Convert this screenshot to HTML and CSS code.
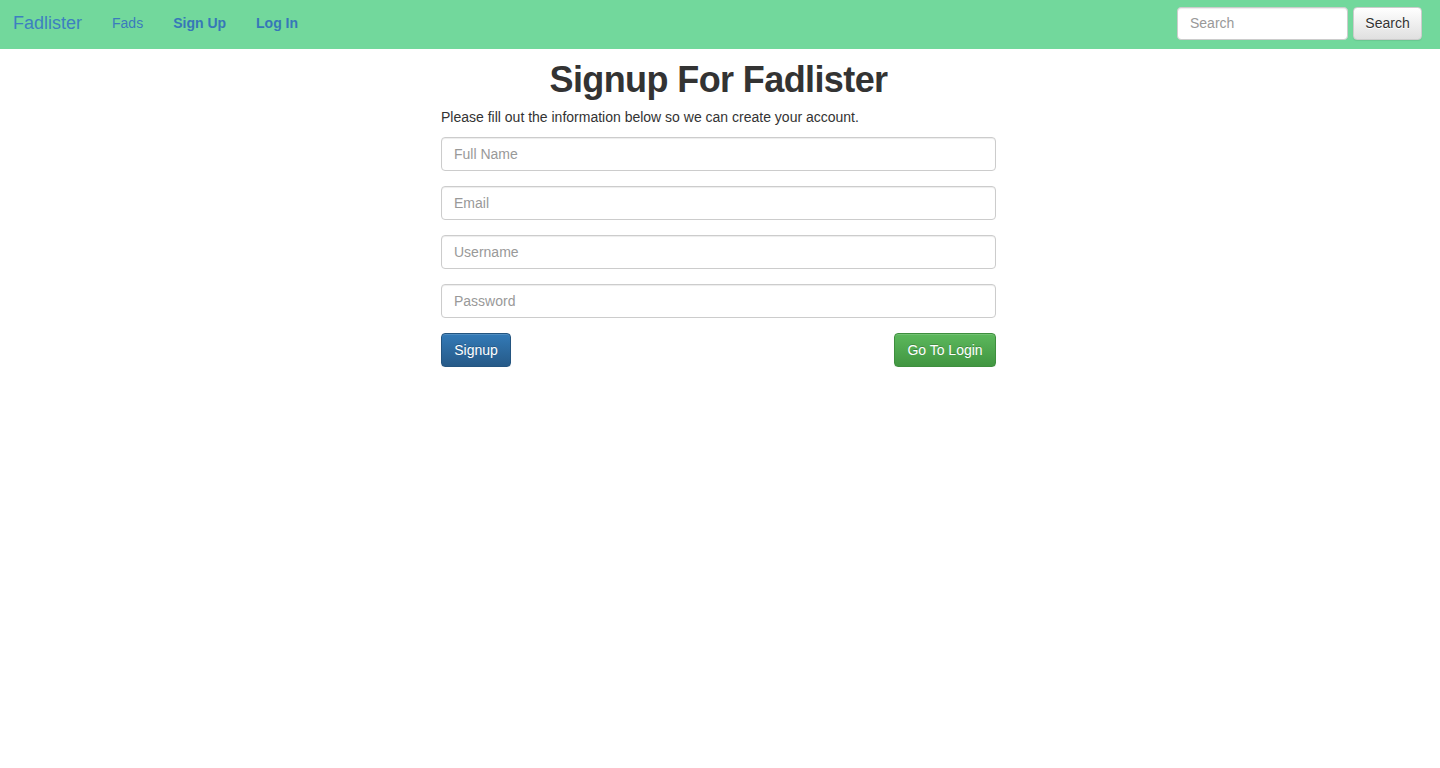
FILE: index.html
```html
<!DOCTYPE html>
<html lang="en">
<head>
<meta charset="utf-8">
<title>Signup For Fadlister</title>
<link rel="stylesheet" href="styles.css">
</head>
<body>
<nav class="navbar">
  <div class="nav-left">
    <a class="brand" href="#">Fadlister</a>
    <a class="nav-link" href="#">Fads</a>
    <a class="nav-link bold" href="#">Sign Up</a>
    <a class="nav-link bold" href="#">Log In</a>
  </div>
  <form class="search-form">
    <input class="search-input" type="text" placeholder="Search">
    <button class="btn btn-default" type="button">Search</button>
  </form>
</nav>
<main class="main">
  <h1 class="title">Signup For Fadlister</h1>
  <p class="intro">Please fill out the information below so we can create your account.</p>
  <form class="signup-form">
    <input class="form-control" type="text" placeholder="Full Name">
    <input class="form-control" type="text" placeholder="Email">
    <input class="form-control" type="text" placeholder="Username">
    <input class="form-control" type="password" placeholder="Password">
    <div class="actions">
      <button class="btn btn-primary" type="button">Signup</button>
      <button class="btn btn-success" type="button">Go To Login</button>
    </div>
  </form>
</main>
</body>
</html>
```
FILE: styles.css
```css
* { box-sizing: border-box; }
html, body { margin: 0; padding: 0; background: #fff; }
body {
  font-family: "Liberation Sans", Arial, Helvetica, sans-serif;
  font-size: 14px;
  line-height: 1.42857;
  color: #333;
}
.navbar {
  height: 49px;
  background: #72d89c;
  display: flex;
  justify-content: space-between;
  align-items: flex-start;
}
.nav-left { display: flex; align-items: flex-start; }
.brand {
  font-size: 18px;
  line-height: 20px;
  padding: 13px 15px 13px 13px;
  color: #3d7fc0;
  text-decoration: none;
}
.nav-link {
  font-size: 14px;
  line-height: 20px;
  padding: 13px 15px;
  color: #3a7bbd;
  text-decoration: none;
}
.nav-link.bold { font-weight: bold; color: #3677b8; }
.search-form {
  display: flex;
  gap: 5px;
  padding: 7px 18px 0 0;
  margin: 0;
}
.search-input {
  width: 171px;
  height: 33px;
  padding: 5px 12px 7px;
  font-family: inherit;
  font-size: 14px;
  color: #555;
  background: #fff;
  border: 1px solid #ccc;
  border-radius: 4px;
  box-shadow: inset 0 1px 1px rgba(0,0,0,.075);
}
.search-input::placeholder, .form-control::placeholder { color: #999; }
.btn {
  height: 33px;
  padding: 6px 12px;
  font-family: inherit;
  font-size: 14px;
  line-height: 20px;
  border-radius: 4px;
  border: 1px solid transparent;
  cursor: pointer;
}
.btn-default {
  width: 69px;
  padding: 5px 0 6px;
  color: #333;
  background: linear-gradient(to bottom, #fff 0%, #e0e0e0 100%);
  border-color: #ccc;
  text-shadow: 0 1px 0 #fff;
  box-shadow: inset 0 1px 0 rgba(255,255,255,.15), 0 1px 1px rgba(0,0,0,.075);
}
.main {
  width: 555px;
  margin: 0 auto;
  padding-right: 3px;
  box-sizing: content-box;
}
.title {
  margin: 11px 0 8px;
  font-size: 36px;
  font-weight: bold;
  letter-spacing: -0.6px;
  line-height: 1.1;
  text-align: center;
  color: #333;
}
.intro { margin: 0 0 9px; }
.signup-form { display: flex; flex-direction: column; }
.form-control {
  display: block;
  width: 100%;
  height: 34px;
  padding: 6px 12px;
  margin-bottom: 15px;
  font-family: inherit;
  font-size: 14px;
  color: #555;
  background: #fff;
  border: 1px solid #ccc;
  border-radius: 4px;
  box-shadow: inset 0 1px 1px rgba(0,0,0,.075);
}
.actions { display: flex; justify-content: space-between; }
.actions .btn { height: 34px; }
.btn-primary {
  width: 70px;
  padding: 6px 0;
  color: #fff;
  background: linear-gradient(to bottom, #337ab7 0%, #265a88 100%);
  border-color: #245580;
  text-shadow: 0 -1px 0 rgba(0,0,0,.2);
  box-shadow: inset 0 1px 0 rgba(255,255,255,.15), 0 1px 1px rgba(0,0,0,.075);
}
.btn-success {
  width: 102px;
  padding: 6px 0;
  color: #fff;
  background: linear-gradient(to bottom, #5cb85c 0%, #419641 100%);
  border-color: #3e8f3e;
  text-shadow: 0 -1px 0 rgba(0,0,0,.2);
  box-shadow: inset 0 1px 0 rgba(255,255,255,.15), 0 1px 1px rgba(0,0,0,.075);
}
```
